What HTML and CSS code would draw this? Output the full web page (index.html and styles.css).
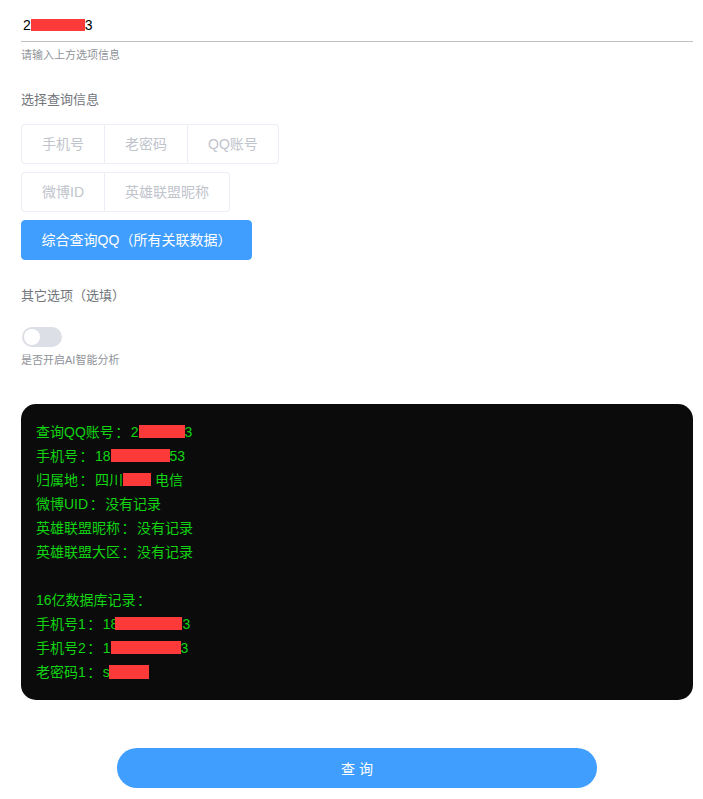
FILE: index.html
```html
<!DOCTYPE html>
<html lang="zh-CN">
<head>
<meta charset="utf-8">
<title>查询</title>
<link rel="stylesheet" href="styles.css">
</head>
<body>
<div class="page">
  <div class="field">
    <div class="input"><span>2</span><span class="mask" style="width:54px"></span><span>3</span></div>
    <div class="hint">请输入上方选项信息</div>
  </div>

  <div class="label">选择查询信息</div>
  <div class="group">
    <span class="opt first">手机号</span><span class="opt">老密码</span><span class="opt last">QQ账号</span>
  </div>
  <div class="group">
    <span class="opt first">微博ID</span><span class="opt last">英雄联盟昵称</span>
  </div>
  <div class="group">
    <span class="opt active">综合查询QQ（所有关联数据）</span>
  </div>

  <div class="label other">其它选项（选填）</div>
  <div class="switch"><span class="knob"></span></div>
  <div class="hint small">是否开启AI智能分析</div>

  <div class="result">
    <div class="line">查询QQ账号<span class="colon">：</span>2<span class="mask" style="width:46px"></span>3</div>
    <div class="line">手机号<span class="colon">：</span>18<span class="mask" style="width:59px"></span>53</div>
    <div class="line">归属地<span class="colon">：</span>四川<span class="mask" style="width:28px"></span> 电信</div>
    <div class="line">微博UID<span class="colon">：</span>没有记录</div>
    <div class="line">英雄联盟昵称<span class="colon">：</span>没有记录</div>
    <div class="line">英雄联盟大区<span class="colon">：</span>没有记录</div>
    <div class="line">&nbsp;</div>
    <div class="line">16亿数据库记录<span class="colon">：</span></div>
    <div class="line">手机号1<span class="colon">：</span>18<span class="mask cover" style="width:67px"></span>3</div>
    <div class="line">手机号2<span class="colon">：</span>1<span class="mask" style="width:70px"></span>3</div>
    <div class="line">老密码1<span class="colon">：</span>s<span class="mask tall cover-s" style="width:40px"></span></div>
  </div>

  <div class="submit-wrap"><button class="submit">查 询</button></div>
</div>
</body>
</html>
```

FILE: styles.css
```css
html, body {
  margin: 0;
  padding: 0;
  background: #fff;
}
body {
  font-family: "Liberation Sans", Arial, "Noto Sans CJK SC", sans-serif;
  font-size: 14px;
  color: #606266;
}
.page {
  padding: 0 10px 0 21px;
}
.field {
  padding-top: 8px;
}
.input {
  height: 33px;
  border-bottom: 1px solid #c0c0c0;
  display: flex;
  align-items: center;
  padding-left: 2px;
  font-size: 14px;
  color: #000;
  line-height: 1;
}
.input .mask {
  height: 12px;
}
.mask {
  display: inline-block;
  background: #fc3a3a;
  height: 13px;
  vertical-align: -1px;
}
.mask.cover {
  margin-left: -3px;
}
.mask.cover-s {
  margin-left: -1px;
}
.mask.tall {
  height: 14px;
  vertical-align: -2px;
}
.colon {
  display: inline-block;
  width: 17px;
  text-align: center;
}
.hint {
  font-size: 11px;
  color: #909399;
  line-height: 14px;
  margin-top: 6px;
}
.label {
  font-size: 13px;
  color: #72767b;
  line-height: 18px;
  margin-top: 29px;
}
.group {
  display: flex;
  margin-top: 8px;
}
.label + .group {
  margin-top: 15px;
}
.opt {
  display: inline-block;
  box-sizing: border-box;
  height: 40px;
  line-height: 38px;
  padding: 0 20px;
  border: 1px solid #ebeef5;
  border-left: 0;
  color: #c0c4cc;
  font-size: 14px;
  background: #fff;
}
.opt.first {
  border-left: 1px solid #ebeef5;
  border-radius: 4px 0 0 4px;
}
.opt.last {
  border-radius: 0 4px 4px 0;
}
.opt.active {
  background: #409eff;
  border: 1px solid #409eff;
  color: #fff;
  border-radius: 4px;
  width: 231px;
  padding: 0;
  text-align: center;
}
.label.other {
  margin-top: 27px;
}
.switch {
  margin-top: 22px;
  margin-left: 1px;
  width: 40px;
  height: 20px;
  border-radius: 10px;
  background: #dcdfe6;
  position: relative;
}
.knob {
  position: absolute;
  top: 2px;
  left: 2px;
  width: 16px;
  height: 16px;
  border-radius: 50%;
  background: #fff;
}
.hint.small {
  margin-top: 6px;
}
.result {
  margin-top: 37px;
  background: #0b0b0b;
  border-radius: 15px;
  padding: 16px 15px 16px 15px;
  height: 296px;
  box-sizing: border-box;
  color: #12d412;
  font-size: 14px;
}
.line {
  line-height: 24px;
  height: 24px;
  white-space: nowrap;
}
.submit-wrap {
  display: flex;
  justify-content: center;
  margin-top: 48px;
}
.submit {
  width: 480px;
  height: 40px;
  border: 0;
  border-radius: 20px;
  background: #409eff;
  color: #fff;
  font-family: "Liberation Sans", Arial, "Noto Sans CJK SC", sans-serif;
  font-size: 14px;
  cursor: pointer;
}
```
